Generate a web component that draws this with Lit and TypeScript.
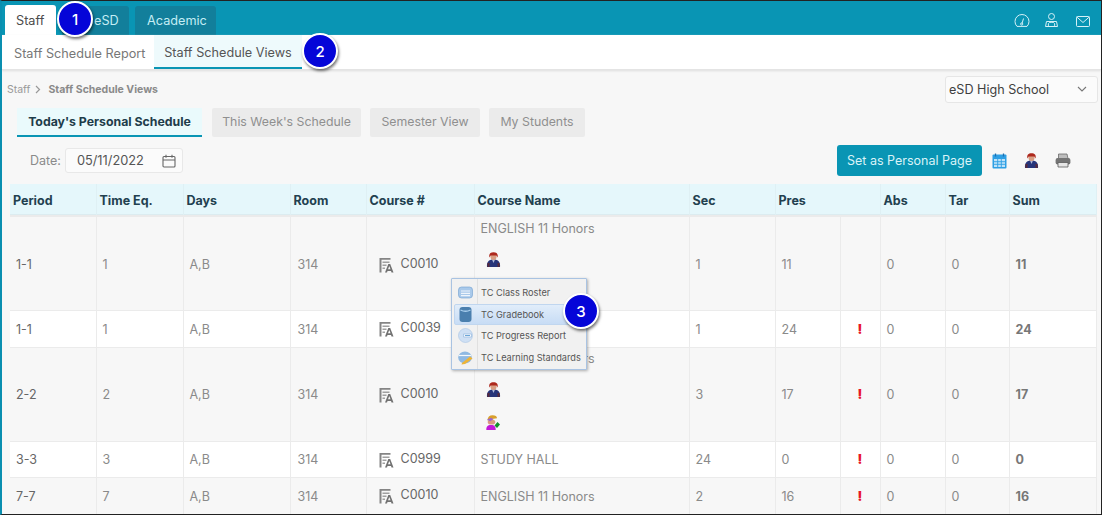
import { LitElement, html, css } from "lit";
import { customElement } from "lit/decorators.js";

const teacher = (s = 15) => html`<svg width=${s} height=${s} viewBox="0 0 15 15" class="ico">
  <path d="M1 15c-.5-5 1.500-7.500 6.500-7.500s7 2.500 6.500 7.500z" fill="#27347a"/>
  <path d="M6 7.500l1.500 3.500 1.500-3.500z" fill="#aeb8d8"/>
  <circle cx="7.500" cy="5" r="3" fill="#d99f84"/>
  <path d="M3.500 5.500C2.500 1.800 4.500 .3 7.500 .3s5 1.500 4 5.200L10.300 3.500H4.700z" fill="#ad281d"/>
  <path d="M1.500 11h2v4h-2zM11.500 11h2v4h-2z" fill="#5a2a3a"/>
</svg>`;

const students = html`<svg width="14" height="15" viewBox="0 0 14 15" class="ico">
  <path d="M.3 15c0-3.500 1-5 4.700-5s4.700 1.500 4.700 5z" fill="#c21ad8"/>
  <ellipse cx="5.500" cy="7" rx="3.800" ry="2.600" fill="#d99a80"/>
  <path d="M1.500 5.500c0-3.500 2-5.200 5-5.200s4.500 1 4.500 3l-5 .7z" fill="#d99f2c"/>
  <path d="M1 4.800l4-2 2.500 1.500-3.500 2z" fill="#9a66cc"/>
  <path d="M8.500 10.500l3-3.500L14 9.500l-3 3.500z" fill="#10922a"/>
</svg>`;

const courseIcon = html`<svg width="15" height="16" viewBox="0 0 15 16" class="course-ico">
  <path d="M.5 1h11v1.800H2.500V15.500H.5z" fill="#858585"/>
  <path d="M3.500 4.500h7v1.500h-7zM3.500 7.500h4V9h-4zM3.500 10.500h2.500V12H3.500z" fill="#a0a0a0"/>
  <path d="M6 15.500l3.300-8.500h1.900l3.300 8.500h-2l-.5-1.600H8.500L8 15.500zM9 12.300h2.500l-1.200-3.400z" fill="#727272"/>
</svg>`;

type Row = {
  period: string; eq: string; room: string; code: string; name: string; sec: string;
  pres: string; flag: boolean; sum: string; alt: boolean; cls: string; extra?: boolean; icons?: boolean;
};

const rows: Row[] = [
  { period: "1-1", eq: "1", room: "314", code: "C0010", name: "ENGLISH 11 Honors", sec: "1", pres: "11", flag: false, sum: "11", alt: true, cls: "t f", icons: true },
  { period: "1-1", eq: "1", room: "314", code: "C0039", name: "", sec: "1", pres: "24", flag: true, sum: "24", alt: false, cls: "m" },
  { period: "2-2", eq: "2", room: "314", code: "C0010", name: "ENGLISH 11 Honors", sec: "3", pres: "17", flag: true, sum: "17", alt: true, cls: "t", icons: true, extra: true },
  { period: "3-3", eq: "3", room: "314", code: "C0999", name: "STUDY HALL", sec: "24", pres: "0", flag: true, sum: "0", alt: false, cls: "s" },
  { period: "7-7", eq: "7", room: "314", code: "C0010", name: "ENGLISH 11 Honors", sec: "2", pres: "16", flag: true, sum: "16", alt: true, cls: "m" },
];

const widths = [86, 87, 107, 76, 108, 215, 86, 65, 40, 65, 64, 87];

@customElement("app-root")
export class AppRoot extends LitElement {
  static styles = css`
    :host { display: block; width: 1102px; height: 515px; overflow: hidden; font-family: Inter, "Noto Sans", sans-serif; color: #6f6f6f; }
    .page { position: relative; width: 1102px; height: 515px; box-sizing: border-box; background: #f7f7f7; border: 1px solid #222; border-left: 2px solid #0a8fb0; overflow: hidden; display: flex; flex-direction: column; }
    .top { height: 34px; flex: none; background: #0995b4; display: flex; align-items: flex-end; padding-left: 3px; }
    .tab { height: 29px; padding: 0 12px; display: flex; align-items: center; font-size: 12.700px; background: #127f9b; color: #c4edf4; border-radius: 3px 3px 0 0; box-sizing: border-box; }
    .tab.on { background: #fff; color: #4c4c4c; height: 30px; width: 51px; padding: 0 0 0 11px; margin-right: 6px; }
    .tab.esd { width: 67px; padding-left: 32px; margin-right: 6px; }
    .tab.acad { width: 81px; }
    .top-icons { margin-left: auto; display: flex; align-items: flex-end; padding: 0 11px 8px 0; }
    .top-icons svg { display: block; }
    .top-icons .person { margin: 0 18px 0 15px; }
    .sub { height: 35px; flex: none; background: #fff; display: flex; box-shadow: 0 1px 2px #ddd; box-sizing: border-box; border-bottom: 1px solid #e4e4e4; }
    .sub div { font-size: 12.700px; color: #777; display: flex; align-items: center; white-space: nowrap; box-sizing: border-box; padding-top: 2px; }
    .sub .one { width: 152px; padding-left: 12px; }
    .sub .on { width: 148px; background: #eefafc; color: #555; border-bottom: 2px solid #0995b4; justify-content: center; }
    .crumbrow { height: 38px; flex: none; display: flex; align-items: center; justify-content: space-between; padding: 0 0 0 5px; box-sizing: border-box; }
    .crumb { font-size: 10.500px; color: #999; display: flex; align-items: center; margin-top: 1px; }
    .crumb b { color: #8a8a8a; font-weight: 700; }
    .crumb svg { display: block; margin: 0 6px 0 4px; }
    .select { width: 153px; height: 27px; box-sizing: border-box; margin: 0 3px 0 0; background: #fbfbfb; border: 1px solid #e6e6e6; border-radius: 3px; font-size: 12.600px; color: #3f3f3f; display: flex; align-items: center; justify-content: space-between; padding: 0 10px 0 3px; }
    .views { flex: none; height: 29px; display: flex; gap: 9px; padding-left: 15px; }
    .views div { font-size: 12.300px; background: #ebebeb; color: #8f8f8f; display: flex; align-items: center; justify-content: center; border-radius: 2px; box-sizing: border-box; padding-bottom: 2px; }
    .views .v1 { width: 185px; background: #eafafc; color: #1e3c4a; font-weight: 700; border-bottom: 2px solid #0995b4; border-radius: 0; margin-right: 1px; padding-bottom: 0; }
    .views .v2 { width: 149px; }
    .views .v3 { width: 110px; }
    .views .v4 { width: 96px; }
    .tools { flex: none; height: 47px; display: flex; align-items: center; padding: 0 0 0 28px; box-sizing: border-box; }
    .tools label { font-size: 12.500px; color: #8a8a8a; margin-right: 4px; }
    .date { width: 118px; height: 25px; box-sizing: border-box; background: #fbfbfb; border: 1px solid #e8e8e8; border-radius: 3px; font-size: 12.800px; color: #555; display: flex; align-items: center; justify-content: space-between; padding: 0 6px 0 11px; }
    .date svg { display: block; }
    .right { margin-left: auto; display: flex; align-items: center; padding-right: 30px; }
    .btn { width: 145px; height: 31px; background: #0995b4; color: #d9f3f8; font-size: 12.500px; border-radius: 3px; display: flex; align-items: center; justify-content: center; margin-right: 10px; }
    .right svg { display: block; }
    .right .gap { margin-left: 17px; }
    .right .printer { margin-left: 16px; }
    table { flex: none; margin: 0 0 0 8px; border-collapse: collapse; table-layout: fixed; width: 1086px; font-size: 12.500px; }
    th { height: 32px; background: #e5f7fb; color: #22404f; font-weight: 700; text-align: left; padding: 1px 0 0 3px; border-right: 1px solid #dff0f4; box-sizing: border-box; font-size: 12.500px; box-shadow: inset 0 -1px 0 #dcecf0; }
    thead tr { border-bottom: 2px solid #ebebeb; }
    td { padding: 0 0 0 6px; border: 1px solid #ebebeb; border-top: 0; border-left: 0; box-sizing: border-box; color: #8a8a8a; vertical-align: middle; background: #fff; }
    td:nth-child(4) { padding-left: 7px; }
    tr.alt td { background: #f7f7f7; }
    tr.t td { height: 94px; }
    tr.f td { padding-top: 2px; }
    tr.m td { height: 37px; }
    tr.s td { height: 36px; }
    td.p { color: #666; }
    td.bold { font-weight: 700; color: #777; }
    td.flag { color: #e8152a; font-weight: 900; text-align: center; padding: 0; }
    td.codecell { padding-left: 12px; }
    .code { display: flex; align-items: center; gap: 7px; color: #666; }
    .code span { margin-top: -3px; }
    .course-ico { display: block; }
    .stack { display: flex; flex-direction: column; align-items: flex-start; height: 93px; padding-top: 3px; box-sizing: border-box; }
    tr.f .stack { height: 91px; padding-top: 2px; }
    .stack .ico { display: block; margin: 16px 0 0 5px; }
    .stack .ico + .ico { margin-top: 18px; }
    .stack span { line-height: 15px; }
    .popup { position: absolute; left: 449px; top: 277px; width: 136px; height: 92px; box-sizing: border-box; background: #f1f1f1; border: 1px solid #a9c3e2; box-shadow: 1px 1px 3px rgba(0,0,0,.3); padding: 3px 2px; font-size: 9.200px; color: #555; border-radius: 1px; }
    .popup::before { content: ""; position: absolute; left: 25px; top: 0; bottom: 0; width: 1px; background: #e0e0e0; }
    .mi { height: 21.500px; box-sizing: border-box; display: flex; align-items: center; gap: 8px; padding-left: 3px; border: 1px solid transparent; border-radius: 2px; white-space: nowrap; position: relative; }
    .mi.on { background: linear-gradient(#e1edfa, #c7dcf5); border-color: #c0d6ef; }
    .mi svg { flex: none; display: block; }
    .badge { position: absolute; width: 36px; height: 36px; box-sizing: border-box; border-radius: 50%; background: #0505d8; border: 2px solid #fff; color: #fff; font-size: 15px; font-weight: 500; display: flex; align-items: center; justify-content: center; box-shadow: 1px 2px 3px rgba(0,0,0,.55); }
    .b1 { left: 55px; top: 0; }
    .b2 { left: 300px; top: 32px; }
    .b3 { left: 561px; top: 292px; }
  `;

  private row(r: Row) {
    return html`<tr class="${r.alt ? "alt" : ""} ${r.cls}">
      <td class="p">${r.period}</td>
      <td>${r.eq}</td>
      <td>A,B</td>
      <td>${r.room}</td>
      <td class="codecell"><div class="code">${courseIcon}<span>${r.code}</span></div></td>
      <td>
        ${r.icons
          ? html`<div class="stack"><span>${r.name}</span>${teacher()}${r.extra ? students : ""}</div>`
          : r.name}
      </td>
      <td>${r.sec}</td>
      <td>${r.pres}</td>
      <td class="flag">${r.flag ? "!" : ""}</td>
      <td>0</td>
      <td>0</td>
      <td class="bold">${r.sum}</td>
    </tr>`;
  }

  render() {
    return html`<div class="page">
      <div class="top">
        <div class="tab on">Staff</div>
        <div class="tab esd">eSD</div>
        <div class="tab acad">Academic</div>
        <div class="top-icons">
          <svg width="16" height="13" viewBox="0 0 16 13" fill="none" stroke="#d6f1f7" stroke-width="1">
            <path d="M3 12.400a7 7 0 1 1 10 0z"/><path d="M8 9.500l1.500-5"/><circle cx="7.700" cy="10" r="1.100"/>
          </svg>
          <svg class="person" width="13" height="14" viewBox="0 0 13 14" fill="none" stroke="#d6f1f7" stroke-width="1">
            <circle cx="6.500" cy="3.500" r="3"/><path d="M1.500 8.500h10l1 5H.5z"/><path d="M4.500 13.500a2 2 0 0 1 2-4 2 2 0 0 1 2 4"/>
          </svg>
          <svg width="14" height="11" viewBox="0 0 14 11" fill="none" stroke="#d6f1f7" stroke-width="1">
            <rect x=".5" y=".5" width="13" height="10" rx="1"/><path d="M.8 1l6.200 5.500L13.200 1"/>
          </svg>
        </div>
      </div>
      <div class="sub">
        <div class="one">Staff Schedule Report</div>
        <div class="on">Staff Schedule Views</div>
      </div>
      <div class="crumbrow">
        <div class="crumb">Staff
          <svg width="8" height="9" viewBox="0 0 8 9" fill="none" stroke="#999" stroke-width="1.200"><path d="M2 1l3.500 3.500L2 8"/></svg>
          <b>Staff Schedule Views</b></div>
        <div class="select">eSD High School
          <svg width="10" height="6" viewBox="0 0 10 6" fill="none" stroke="#777" stroke-width="1.100"><path d="M1 1l4 4 4-4"/></svg>
        </div>
      </div>
      <div class="views">
        <div class="v1">Today's Personal Schedule</div>
        <div class="v2">This Week's Schedule</div>
        <div class="v3">Semester View</div>
        <div class="v4">My Students</div>
      </div>
      <div class="tools">
        <label>Date:</label>
        <div class="date">05/11/2022
          <svg width="14" height="14" viewBox="0 0 14 14" fill="none" stroke="#666" stroke-width="1.100">
            <rect x="1" y="2.500" width="12" height="10.500" rx="1"/><path d="M1 6h12M4 .8v3M10 .8v3"/>
          </svg>
        </div>
        <div class="right">
          <div class="btn">Set as Personal Page</div>
          <svg width="15" height="16" viewBox="0 0 15 16">
            <rect x=".5" y="1.500" width="14" height="14" rx="1" fill="#2e9fe4"/>
            <path d="M2 6h11v8H2z" fill="#bfe2f8"/>
            <path d="M2 8.700h11M2 11.300h11M5.700 6v8M9.300 6v8" stroke="#2e9fe4" stroke-width=".9"/>
            <path d="M3.500 .5v3M11.500 .5v3" stroke="#1f6fb0" stroke-width="1.300"/>
          </svg>
          <span class="gap">${teacher(15)}</span>
          <svg class="printer" width="16" height="15" viewBox="0 0 16 15">
            <path d="M3.500 1h8.500l1 4.500H3.500z" fill="#bdbdbd" stroke="#6a6a6a" stroke-width=".8"/>
            <rect x=".6" y="5" width="14.800" height="6.500" rx="2" fill="#747474"/>
            <path d="M3 9.500h10V14H3z" fill="#e6e6e6" stroke="#5a5a5a" stroke-width=".8"/>
          </svg>
        </div>
      </div>
      <table>
        <colgroup>${widths.map((w) => html`<col style="width:${w}px" />`)}</colgroup>
        <thead>
          <tr>
            <th>Period</th><th>Time Eq.</th><th>Days</th><th>Room</th><th>Course #</th><th>Course Name</th>
            <th>Sec</th><th colspan="2">Pres</th><th>Abs</th><th>Tar</th><th>Sum</th>
          </tr>
        </thead>
        <tbody>${rows.map((r) => this.row(r))}</tbody>
      </table>

      <div class="popup">
        <div class="mi">
          <svg width="15" height="15" viewBox="0 0 15 15"><rect x=".5" y="2" width="14" height="11" rx="3" fill="#a9c9ea" stroke="#6f9fd0" stroke-width=".6"/><path d="M3 6h9M3 8.300h9M3 10.600h9" stroke="#eef4fb" stroke-width="1.200"/></svg>
          <span>TC Class Roster</span></div>
        <div class="mi on">
          <svg width="15" height="17" viewBox="0 0 15 17"><rect x="1.500" y="1" width="12" height="15" rx="3" fill="#4a7fae"/><path d="M2.500 4c3 1.500 7 1.500 10 0" stroke="#a9cfee" fill="none" stroke-width="1.300"/></svg>
          <span>TC Gradebook</span></div>
        <div class="mi">
          <svg width="15" height="15" viewBox="0 0 15 15"><circle cx="7.500" cy="7.500" r="7" fill="#cfe0f4" stroke="#a7c4e4" stroke-width=".6"/><path d="M5.500 6h8v3h-8z" fill="#f4f8fc" stroke="#8db3dc" stroke-width=".6"/><path d="M7 7.500h5" stroke="#6ea6d6" stroke-width="1"/></svg>
          <span>TC Progress Report</span></div>
        <div class="mi">
          <svg width="15" height="15" viewBox="0 0 15 15"><ellipse cx="7" cy="7.500" rx="6.800" ry="6" fill="#8fb9e2"/><path d="M.8 5.500h12.400" stroke="#f4f8fc" stroke-width="1.200"/><path d="M4 13l8-6.500 2.500 2L7 14l-3.500.5z" fill="#eeb436"/></svg>
          <span>TC Learning Standards</span></div>
      </div>

      <div class="badge b1">1</div>
      <div class="badge b2">2</div>
      <div class="badge b3">3</div>
    </div>`;
  }
}
